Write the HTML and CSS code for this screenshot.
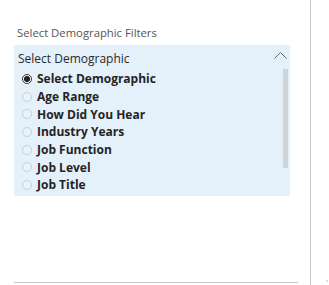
FILE: index.html
```html
<!DOCTYPE html>
<html>
<head>
<meta charset="utf-8">
<link rel="stylesheet" href="styles.css">
</head>
<body>
<div class="page">
  <div class="panel">
    <div class="title">Select Demographic Filters</div>
    <div class="slicer">
      <div class="slicer-head">
        <span class="head-text">Select Demographic</span>
        <svg class="chev" width="13" height="8" viewBox="0 0 13 8"><path d="M0.5 7.5 L6.5 1.5 L12.5 7.5" fill="none" stroke="#666" stroke-width="1"/></svg>
      </div>
      <div class="slicer-body">
        <ul class="list">
          <li class="item"><span class="radio on"></span>Select Demographic</li>
          <li class="item"><span class="radio"></span>Age Range</li>
          <li class="item"><span class="radio"></span>How Did You Hear</li>
          <li class="item"><span class="radio"></span>Industry Years</li>
          <li class="item"><span class="radio"></span>Job Function</li>
          <li class="item"><span class="radio"></span>Job Level</li>
          <li class="item"><span class="radio"></span>Job Title</li>
        </ul>
        <div class="scroll"><div class="thumb"></div></div>
      </div>
    </div>
    <div class="spacer"></div>
    <div class="rule"></div>
  </div>
  <div class="side"><span class="dot"></span></div>
</div>
</body>
</html>
```
FILE: styles.css
```css
html, body { margin: 0; padding: 0; background: #fff; }
body { font-family: "Open Sans", "Noto Sans", sans-serif; }
.page { display: flex; height: 285px; width: 329px; }
.panel {
  width: 296px;
  padding: 0 0 0 14px;
  border-right: 1px solid #c8c8c8;
  display: flex;
  flex-direction: column;
}
.title {
  margin-top: 26px;
  padding-left: 3px;
  font-size: 11.3px;
  line-height: 14px;
  color: #555;
  height: 19px;
}
.slicer {
  width: 276px;
  background: #e4f0fa;
  display: flex;
  flex-direction: column;
}
.slicer-head {
  height: 24px;
  display: flex;
  align-items: center;
  justify-content: space-between;
  padding: 0 3px 0 4px;
}
.head-text { font-size: 12px; color: #2a2a2a; margin-top: 3px; }
.chev { margin-bottom: 4px; }
.slicer-body { display: flex; padding-top: 1px; padding-bottom: 2px; }
.list { list-style: none; margin: 0; padding: 0 0 0 8px; flex: 1; }
.item {
  height: 17.7px;
  display: flex;
  align-items: center;
  font-size: 12px;
  font-weight: 700;
  color: #252423;
}
.radio {
  width: 10px; height: 10px;
  border: 1px solid #c9cfd5;
  border-radius: 50%;
  box-sizing: border-box;
  margin-right: 5px;
  background: #e9f3fb;
}
.radio.on {
  border: 1px solid #333;
  background: radial-gradient(circle, #222 0 2.8px, #fff 3.2px);
}
.scroll { width: 5px; margin-right: 2px; margin-top: -1px; }
.thumb { width: 5px; height: 99px; background: #cfd4d8; }
.spacer { flex: 1; }
.rule { width: 284px; height: 1px; background: #c8c8c8; margin-bottom: 2px; }
.side { flex: 1; display: flex; align-items: flex-end; justify-content: flex-end; }
.dot { width: 2px; height: 2px; background: #ddd; margin: 0 1px 3px 0; }
```
